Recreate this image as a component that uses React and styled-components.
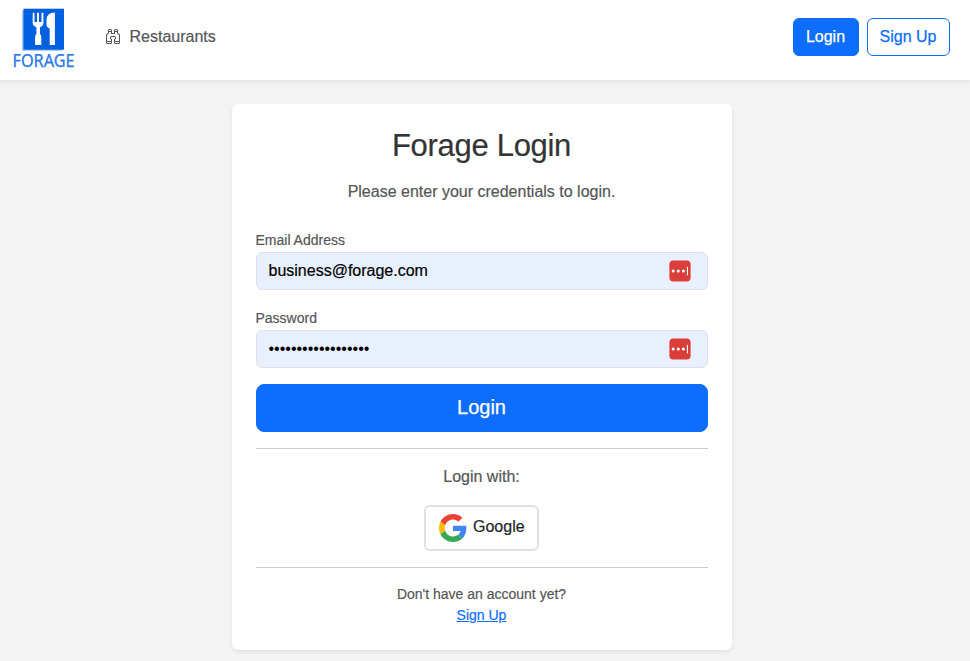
import React from "react";
import styled, { createGlobalStyle } from "styled-components";
import { BsBinoculars } from "react-icons/bs";

const GlobalStyle = createGlobalStyle`
  *, *::before, *::after { box-sizing: border-box; }
  html, body { margin: 0; background: #f3f3f3; }
  body {
    font-family: "Liberation Sans", Arial, sans-serif;
    font-size: 16px;
    line-height: 24px;
    color: #555657;
    overflow: hidden;
    -webkit-text-stroke: 0.2px currentColor;
  }
`;

const Page = styled.div`
  min-height: 661px;
  background: #f3f3f3;
`;

const Navbar = styled.header`
  display: flex;
  align-items: flex-start;
  height: 80px;
  padding: 0 20px 0 13px;
  background: #fff;
  box-shadow: 0 2px 4px rgba(0, 0, 0, 0.075);
`;

const Brand = styled.a`
  display: flex;
  flex-direction: column;
  width: 62px;
  padding-top: 8px;
`;

const LogoMark = styled.svg`
  display: block;
  width: 62px;
  height: 60px;
  overflow: visible;
  -webkit-text-stroke: 0;
`;

const NavLink = styled.a`
  display: flex;
  align-items: center;
  gap: 8.5px;
  margin: 25px auto 0 30px;
  color: #555657;

  svg {
    width: 16px;
    height: 16px;
    margin-bottom: 2px;
  }
`;

const NavActions = styled.div`
  display: flex;
  gap: 8px;
  padding-top: 18px;
`;

const Button = styled.button`
  height: 38px;
  width: ${(p) => p.$width}px;
  padding: 0 1px 1px 0;
  border: 1px solid #0d6efd;
  border-radius: 6px;
  background: ${(p) => (p.$outline ? "#fff" : "#0d6efd")};
  color: ${(p) => (p.$outline ? "#0d6efd" : "#fff")};
  font: 16px/24px "Liberation Sans", Arial, sans-serif;
  -webkit-text-stroke: 0.25px currentColor;
`;

const SubmitButton = styled(Button)`
  width: 100%;
  height: 48px;
  border-radius: 8px;
  padding: 0 1px 2px 0;
  font-size: 20px;
  line-height: 30px;
`;

const Card = styled.main`
  width: 500px;
  height: 546px;
  margin: 24px 0 0 232px;
  padding: 24px;
  border-radius: 6px;
  background: #fff;
  box-shadow: 0 2px 4px rgba(0, 0, 0, 0.075);
`;

const Title = styled.h1`
  margin: 0 0 16px;
  padding-right: 1px;
  color: #333435;
  font-size: 31px;
  font-weight: 400;
  letter-spacing: -0.3px;
  line-height: 35px;
  height: 36px;
  text-align: center;
`;

const Text = styled.p`
  margin: 0 0 ${(p) => p.$gap}px;
  padding-right: 1px;
  text-align: center;
`;

const Field = styled.div`
  margin-bottom: 16px;
`;

const Label = styled.label`
  display: block;
  height: 24px;
  margin-left: -0.5px;
  font-size: 14px;
  line-height: 24px;
`;

const InputShell = styled.div`
  display: flex;
  align-items: center;
  height: 38px;
  padding: 0 16px 0 11.5px;
  border: 1px solid #dee2e6;
  border-radius: 6px;
  background: #e8f0fe;
`;

const Input = styled.input`
  flex: 1;
  min-width: 0;
  padding: 0 0 1px;
  border: 0;
  outline: 0;
  background: transparent;
  color: #000;
  font: 16px/24px "Liberation Sans", Arial, sans-serif;
  -webkit-text-stroke: 0.2px currentColor;

  &[type="password"] {
    -webkit-text-stroke: 0;
  }
`;

const FillBadge = styled.svg`
  width: 22px;
  height: 22px;
`;

const Divider = styled.hr`
  height: 1px;
  margin: 16px 0;
  border: 0;
  background: #c9cacb;
`;

const GoogleButton = styled.button`
  display: flex;
  align-items: center;
  width: 115px;
  height: 46px;
  margin: 0 0 0 168px;
  padding: 0 0 0 13px;
  gap: 6px;
  border: 2px solid #dee2e6;
  border-radius: 6px;
  background: #fff;
  color: #212529;
  font: 16px/24px "Liberation Sans", Arial, sans-serif;
  -webkit-text-stroke: 0.2px currentColor;

  svg {
    width: 28px;
    height: 28px;
    flex: none;
  }

  span {
    padding-bottom: 2px;
  }
`;

const Footer = styled.footer`
  display: flex;
  flex-direction: column;
  align-items: center;
  padding-right: 1px;
  font-size: 14px;
  line-height: 21px;

  a {
    color: #0d6efd;
    text-decoration: underline;
  }
`;

function ForageLogo() {
  return (
    <LogoMark viewBox="0 0 62 60" role="img" aria-label="Forage">
      <rect x="9" y="2.5" width="40" height="40.3" fill="#9fc3f5" />
      <rect x="10.5" y="0.7" width="40.5" height="41" fill="#0060df" />
      <g fill="#fff">
        <path d="M19.7 4.7h1.8v9.3h2.5v-9.3h2v9.3h2.5v-9.3h1.9v10.3q0 3-3.4 4.3v6.8q1.3.9 1.3 3.2v7.8h-6.2v-7.8q0-2.3 1.3-3.2v-6.8q-3.7-1.3-3.7-4.3z" />
        <path d="M41.9 4.5V37h-5.2V20.4q-3.2-.8-3.2-4v-4.2q0-7.7 8.4-7.7z" />
      </g>
      <text
        x="-0.5"
        y="59"
        textLength="62"
        lengthAdjust="spacingAndGlyphs"
        fill="#2878e6"
        stroke="#2878e6"
        strokeWidth="0.25"
        fontFamily="Noto Sans, sans-serif"
        fontSize="17.2"
      >
        FORAGE
      </text>
    </LogoMark>
  );
}

function AutofillIcon() {
  return (
    <FillBadge viewBox="0 0 22 22" aria-hidden="true">
      <rect x="0.4" y="0.4" width="21.2" height="21.2" rx="3.8" fill="#d93e39" />
      <g fill="#fff">
        <circle cx="4.2" cy="11" r="1.5" />
        <circle cx="9.3" cy="11" r="1.5" />
        <circle cx="14.4" cy="11" r="1.5" />
        <rect x="17.9" y="6.8" width="1.1" height="8.6" rx="0.4" />
      </g>
    </FillBadge>
  );
}

function GoogleIcon() {
  return (
    <svg viewBox="0 0 48 48" aria-hidden="true">
      <path fill="#EA4335" d="M24 9.5c3.54 0 6.71 1.22 9.21 3.6l6.85-6.85C35.9 2.38 30.47 0 24 0 14.62 0 6.51 5.38 2.56 13.22l7.98 6.19C12.43 13.72 17.74 9.5 24 9.5z" />
      <path fill="#4285F4" d="M46.98 24.55c0-1.57-.15-3.09-.38-4.55H24v9.02h12.94c-.58 2.96-2.26 5.48-4.78 7.18l7.73 6c4.51-4.18 7.09-10.36 7.09-17.65z" />
      <path fill="#FBBC05" d="M10.53 28.59A14.5 14.5 0 0 1 9.77 24c0-1.6.27-3.14.76-4.59l-7.98-6.19A23.94 23.94 0 0 0 0 24c0 3.88.92 7.54 2.56 10.78z" />
      <path fill="#34A853" d="M24 48c6.48 0 11.93-2.13 15.89-5.81l-7.73-6c-2.15 1.45-4.92 2.3-8.16 2.3-6.26 0-11.57-4.22-13.47-9.91l-7.98 6.19C6.51 42.62 14.62 48 24 48z" />
    </svg>
  );
}

function FormField({ id, label, type, value }) {
  return (
    <Field>
      <Label htmlFor={id}>{label}</Label>
      <InputShell>
        <Input id={id} type={type} defaultValue={value} />
        <AutofillIcon />
      </InputShell>
    </Field>
  );
}

export default function App() {
  return (
    <>
      <GlobalStyle />
      <Page>
        <Navbar>
          <Brand>
            <ForageLogo />
          </Brand>
          <NavLink>
            <BsBinoculars />
            Restaurants
          </NavLink>
          <NavActions>
            <Button $width={66}>Login</Button>
            <Button $width={83} $outline>Sign Up</Button>
          </NavActions>
        </Navbar>
        <Card>
          <Title>Forage Login</Title>
          <Text $gap={24}>Please enter your credentials to login.</Text>
          <FormField id="email" label="Email Address" type="text" value="business@forage.com" />
          <FormField id="password" label="Password" type="password" value="foragebusiness2023" />
          <SubmitButton>Login</SubmitButton>
          <Divider />
          <Text $gap={16}>Login with:</Text>
          <GoogleButton>
            <GoogleIcon />
            <span>Google</span>
          </GoogleButton>
          <Divider />
          <Footer>
            <span>Don't have an account yet?</span>
            <a>Sign Up</a>
          </Footer>
        </Card>
      </Page>
    </>
  );
}
